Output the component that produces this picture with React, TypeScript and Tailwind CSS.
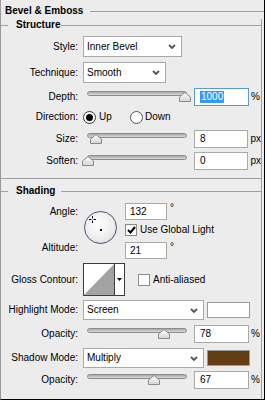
import React from 'react';

const Label = ({ children }: { children: React.ReactNode }) => (
  <div className="w-[77px] shrink-0 text-right whitespace-nowrap">{children}</div>
);

const Chevron = () => (
  <svg width="8" height="5" viewBox="0 0 8 5" className="shrink-0">
    <path d="M1 1 L4 4 L7 1" fill="none" stroke="#555" strokeWidth="1.8" />
  </svg>
);

const Select = ({ text, w }: { text: string; w: string }) => (
  <div className={`ml-[5px] h-full border border-[#a9a9a9] bg-white flex items-center justify-between pl-[3px] pr-[5px] ${w}`}>
    <span>{text}</span>
    <Chevron />
  </div>
);

const Thumb = () => (
  <svg width="12" height="10" viewBox="0 0 12 10">
    <defs>
      <linearGradient id="tg" x1="0" y1="0" x2="0" y2="1">
        <stop offset="0" stopColor="#ffffff" />
        <stop offset="1" stopColor="#d4d4d4" />
      </linearGradient>
    </defs>
    <path d="M6 0.5 L11.5 5 V9.5 H0.5 V5 Z" fill="url(#tg)" stroke="#8a8a8a" />
  </svg>
);

// thumb center x on the page, slider column starts at x=82
const Slider = ({ center }: { center: number }) => (
  <div className="relative ml-[5px] w-[107px] self-stretch shrink-0">
    <div className="ml-[4px] mt-[3px] w-[100px] h-[5px] rounded-full border border-[#8c8c8c] bg-gradient-to-b from-[#a6a6a6] to-[#dcdcdc]" />
    <div className="absolute top-[4px]" style={{ left: center - 88 }}>
      <Thumb />
    </div>
  </div>
);

const Input = ({ value }: { value: string }) => (
  <div className="ml-[4px] w-[55px] h-full border border-[#a9a9a9] bg-white flex items-center pl-[5px]">
    {value}
  </div>
);

const Swatch = ({ color }: { color: string }) => (
  <div className={`ml-[3px] w-[43px] h-[16px] border border-[#9a9a9a] ${color}`} />
);

const Check = ({ checked }: { checked?: boolean }) => (
  <div className="w-[12px] h-[12px] border border-[#8a8a8a] bg-white flex items-center justify-center shrink-0">
    {checked && (
      <svg width="9" height="8" viewBox="0 0 9 8">
        <path d="M1 4 L3.5 6.5 L8 1" fill="none" stroke="#000" strokeWidth="2" />
      </svg>
    )}
  </div>
);

export default function App() {
  return (
    <div className="w-[265px] h-[400px] bg-[#ececec] border-l border-l-[#9a9a9a] border-r border-r-black border-b border-b-black text-[10px] leading-[12px] text-black font-['Liberation_Sans',Arial,sans-serif] overflow-hidden">
      {/* Bevel & Emboss */}
      <div className="pt-[4px] h-[18px] flex items-center">
        <span className="pl-[4px] font-bold">Bevel &amp; Emboss</span>
        <div className="ml-[7px] flex-1 h-px bg-[#a0a0a0]" />
      </div>

      <div className="w-[261px] border-r border-[#a0a0a0]">
        {/* Structure */}
        <div className="mt-[1px] h-[12px] flex items-center">
          <div className="w-[7px] h-px bg-[#a0a0a0]" />
          <span className="ml-[8px] font-bold">Structure</span>
          <div className="ml-[1px] flex-1 h-px bg-[#a0a0a0]" />
        </div>

        <div className="mt-[5px] h-[21px] flex items-center">
          <Label>Style:</Label>
          <Select text="Inner Bevel" w="w-[99px]" />
        </div>

        <div className="mt-[5px] h-[21px] flex items-center">
          <Label>Technique:</Label>
          <Select text="Smooth" w="w-[83px]" />
        </div>

        <div className="mt-[5px] h-[18px] flex items-center">
          <Label>Depth:</Label>
          <Slider center={184} />
          <div className="ml-[4px] w-[55px] h-full border border-[#5b9bd5] bg-white flex items-center pl-[5px]">
            <span className="bg-[#3399ff] text-white px-px">1000</span>
          </div>
          <span className="ml-[2px]">%</span>
        </div>

        <div className="mt-[4px] h-[14px] flex items-center">
          <Label>Direction:</Label>
          <div className="ml-[5px] w-[47px] flex items-center">
            <div className="w-[13px] h-[13px] rounded-full border border-[#333] bg-white flex items-center justify-center">
              <div className="w-[7px] h-[7px] rounded-full bg-black" />
            </div>
            <span className="ml-[3px]">Up</span>
          </div>
          <div className="w-[13px] h-[13px] rounded-full border border-[#555] bg-white" />
          <span className="ml-[2px]">Down</span>
        </div>

        <div className="mt-[6px] h-[18px] flex items-center">
          <Label>Size:</Label>
          <Slider center={95} />
          <Input value="8" />
          <span className="ml-[2px]">px</span>
        </div>

        <div className="mt-[4px] h-[18px] flex items-center">
          <Label>Soften:</Label>
          <Slider center={87} />
          <Input value="0" />
          <span className="ml-[2px]">px</span>
        </div>

        <div className="mt-[8px] h-px bg-[#a0a0a0]" />

        {/* Shading */}
        <div className="mt-[6px] h-[12px] flex items-center">
          <div className="w-[7px] h-px bg-[#a0a0a0]" />
          <span className="ml-[8px] font-bold">Shading</span>
          <div className="ml-[6px] flex-1 h-px bg-[#a0a0a0]" />
        </div>

        <div className="mt-[6px] h-[56px] flex">
          <div className="w-[77px] shrink-0 text-right">
            <div className="pt-[3px]">Angle:</div>
            <div className="mt-[24px]">Altitude:</div>
          </div>
          <div className="relative ml-[6px] mt-[8px] w-[33px] h-[33px] rounded-full border-[1.5px] border-[#42527a] bg-[radial-gradient(circle_at_45%_40%,#ffffff,#eeeeee_55%,#d2d2d2)] shrink-0">
            <svg className="absolute left-[4px] top-[4px]" width="7" height="7" viewBox="0 0 7 7">
              <path d="M3.5 0 V2.5 M3.5 4.5 V7 M0 3.5 H2.5 M4.5 3.5 H7" stroke="#000" strokeWidth="1" />
            </svg>
            <div className="absolute left-[15px] top-[17px] w-[2px] h-[2px] bg-black" />
          </div>
          <div className="ml-[8px] flex flex-col">
            <div className="h-[17px] flex">
              <div className="w-[42px] h-full border border-[#a9a9a9] bg-white flex items-center pl-[4px]">132</div>
              <span className="ml-[3px] -mt-[1px]">°</span>
            </div>
            <div className="mt-[4px] h-[12px] flex items-center">
              <Check checked />
              <span className="ml-[3px] whitespace-nowrap">Use Global Light</span>
            </div>
            <div className="mt-[6px] h-[17px] flex">
              <div className="w-[42px] h-full border border-[#a9a9a9] bg-white flex items-center pl-[4px]">21</div>
              <span className="ml-[3px] -mt-[1px]">°</span>
            </div>
          </div>
        </div>

        <div className="mt-[4px] h-[33px] flex items-center">
          <Label>Gloss Contour:</Label>
          <div className="ml-[5px] w-[42px] h-[33px] border border-[#3c3c3c] bg-white flex shrink-0">
            <svg width="30" height="31" viewBox="0 0 30 31">
              <polygon points="0,31 30,0 30,31" fill="#a3a3a3" />
            </svg>
            <div className="w-[10px] border-l border-[#3c3c3c] flex items-center justify-center">
              <svg width="5" height="3" viewBox="0 0 5 3">
                <polygon points="0,0 5,0 2.5,3" fill="#000" />
              </svg>
            </div>
          </div>
          <div className="ml-[13px]">
            <Check />
          </div>
          <span className="ml-[3px]">Anti-aliased</span>
        </div>

        <div className="mt-[4px] h-[20px] flex items-center">
          <Label>Highlight Mode:</Label>
          <Select text="Screen" w="w-[121px]" />
          <Swatch color="bg-white" />
        </div>

        <div className="mt-[5px] h-[18px] flex items-center">
          <Label>Opacity:</Label>
          <Slider center={163} />
          <Input value="78" />
          <span className="ml-[2px]">%</span>
        </div>

        <div className="mt-[5px] h-[20px] flex items-center">
          <Label>Shadow Mode:</Label>
          <Select text="Multiply" w="w-[121px]" />
          <Swatch color="bg-[#643e13]" />
        </div>

        <div className="mt-[3px] h-[18px] flex items-center">
          <Label>Opacity:</Label>
          <Slider center={153} />
          <Input value="67" />
          <span className="ml-[2px]">%</span>
        </div>

        <div className="h-[10px]" />
      </div>
    </div>
  );
}
